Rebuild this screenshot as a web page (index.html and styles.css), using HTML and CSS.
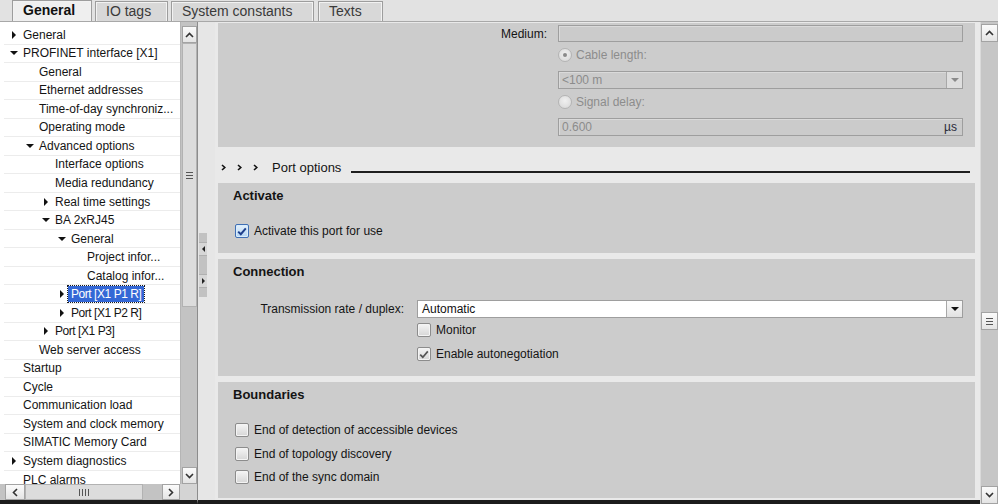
FILE: index.html
```html
<!DOCTYPE html>
<html>
<head>
<meta charset="utf-8">
<link rel="stylesheet" href="styles.css">
</head>
<body>
<div class="app">
  <div class="tabbar">
    <div class="tab active t1">General</div>
    <div class="tab t2">IO tags</div>
    <div class="tab t3">System constants</div>
    <div class="tab t4">Texts</div>
  </div>
  <div class="main">
    <div class="left">
      <div class="tree-area">
        <div class="tree">
          <div class="row l0"><span class="tw"><i class="ar-r"></i></span><span>General</span></div>
          <div class="row l0"><span class="tw"><i class="ar-d"></i></span><span>PROFINET interface [X1]</span></div>
          <div class="row l1"><span class="tw"></span><span>General</span></div>
          <div class="row l1"><span class="tw"></span><span>Ethernet addresses</span></div>
          <div class="row l1"><span class="tw"></span><span>Time-of-day synchroniz...</span></div>
          <div class="row l1"><span class="tw"></span><span>Operating mode</span></div>
          <div class="row l1"><span class="tw"><i class="ar-d"></i></span><span>Advanced options</span></div>
          <div class="row l2"><span class="tw"></span><span>Interface options</span></div>
          <div class="row l2"><span class="tw"></span><span>Media redundancy</span></div>
          <div class="row l2"><span class="tw"><i class="ar-r"></i></span><span>Real time settings</span></div>
          <div class="row l2"><span class="tw"><i class="ar-d"></i></span><span>BA 2xRJ45</span></div>
          <div class="row l3"><span class="tw"><i class="ar-d"></i></span><span>General</span></div>
          <div class="row l4"><span class="tw"></span><span>Project infor...</span></div>
          <div class="row l4"><span class="tw"></span><span>Catalog infor...</span></div>
          <div class="row l3"><span class="tw"><i class="ar-r"></i></span><span class="sel nar">Port [X1 P1 R]</span></div>
          <div class="row l3"><span class="tw"><i class="ar-r"></i></span><span class="nar">Port [X1 P2 R]</span></div>
          <div class="row l2"><span class="tw"><i class="ar-r"></i></span><span class="nar">Port [X1 P3]</span></div>
          <div class="row l1"><span class="tw"></span><span>Web server access</span></div>
          <div class="row l0"><span class="tw"></span><span>Startup</span></div>
          <div class="row l0"><span class="tw"></span><span>Cycle</span></div>
          <div class="row l0"><span class="tw"></span><span>Communication load</span></div>
          <div class="row l0"><span class="tw"></span><span>System and clock memory</span></div>
          <div class="row l0"><span class="tw"></span><span>SIMATIC Memory Card</span></div>
          <div class="row l0"><span class="tw"><i class="ar-r"></i></span><span>System diagnostics</span></div>
          <div class="row l0"><span class="tw"></span><span>PLC alarms</span></div>
        </div>
        <div class="vscroll">
          <div class="sbtn"><svg width="9" height="6" viewBox="0 0 9 6"><polyline points="1,5 4.5,1.5 8,5" fill="none" stroke="#333" stroke-width="1.6"/></svg></div>
          <div class="thumb"><span class="grip"><i></i><i></i><i></i></span></div>
          <div class="track"></div>
          <div class="sbtn"><svg width="9" height="6" viewBox="0 0 9 6"><polyline points="1,1 4.5,4.5 8,1" fill="none" stroke="#333" stroke-width="1.6"/></svg></div>
        </div>
      </div>
      <div class="hrow">
        <div class="hscroll">
          <div class="hbtn hl"><svg width="6" height="9" viewBox="0 0 6 9"><polyline points="5,1 1.5,4.5 5,8" fill="none" stroke="#333" stroke-width="1.6"/></svg></div>
          <div class="hthumb"><span class="vgrip"><i></i><i></i><i></i><i></i></span></div>
          <div class="htrack"></div>
          <div class="hbtn hr"><svg width="6" height="9" viewBox="0 0 6 9"><polyline points="1,1 4.5,4.5 1,8" fill="none" stroke="#333" stroke-width="1.6"/></svg></div>
        </div>
        <div class="corner"></div>
      </div>
    </div>

    <div class="splitter">
      <div class="handle">
        <div class="hb"><i class="sa-l"></i></div>
        <div class="hb"><i class="sa-r"></i></div>
      </div>
    </div>

    <div class="right">
      <div class="content">
        <div class="sec s1">
          <div class="frow">
            <span class="lbl">Medium:</span>
            <div class="fld dis"></div>
          </div>
          <div class="frow ind r-cable">
            <span class="rd on"></span><span class="dtx">Cable length:</span>
          </div>
          <div class="frow ind r-drop">
            <div class="fld dis tall"><span class="dval">&lt;100 m</span><span class="ddb dis-b"><i class="tri g"></i></span></div>
          </div>
          <div class="frow ind r-sig">
            <span class="rd"></span><span class="dtx">Signal delay:</span>
          </div>
          <div class="frow ind r-val">
            <div class="fld dis tall"><span class="dval">0.600</span><span class="unit">µs</span></div>
          </div>
        </div>

        <div class="ohead">
          <span class="chev"><svg width="5" height="7" viewBox="0 0 5 7"><polyline points="1,1 3.8,3.5 1,6" fill="none" stroke="#111" stroke-width="1.6"/></svg></span>
          <span class="chev"><svg width="5" height="7" viewBox="0 0 5 7"><polyline points="1,1 3.8,3.5 1,6" fill="none" stroke="#111" stroke-width="1.6"/></svg></span>
          <span class="chev"><svg width="5" height="7" viewBox="0 0 5 7"><polyline points="1,1 3.8,3.5 1,6" fill="none" stroke="#111" stroke-width="1.6"/></svg></span>
          <span class="otitle">Port options</span>
          <span class="oline"></span>
        </div>

        <div class="sec s2">
          <div class="stitle">Activate</div>
          <div class="crow a1">
            <span class="cb blue"><svg width="10" height="9" viewBox="0 0 10 9"><polyline points="1.2,4.6 3.8,7.2 8.8,1.4" fill="none" stroke="#1e3f8c" stroke-width="2"/></svg></span>
            <span>Activate this port for use</span>
          </div>
        </div>

        <div class="sec s3">
          <div class="stitle">Connection</div>
          <div class="frow c-drop">
            <span class="lbl2">Transmission rate / duplex:</span>
            <div class="fld en"><span class="eval">Automatic</span><span class="ddb"><i class="tri"></i></span></div>
          </div>
          <div class="crow c-mon">
            <span class="cb"></span><span>Monitor</span>
          </div>
          <div class="crow c-auto">
            <span class="cb"><svg width="10" height="9" viewBox="0 0 10 9"><polyline points="1.2,4.6 3.8,7.2 8.8,1.4" fill="none" stroke="#555" stroke-width="1.7"/></svg></span><span>Enable autonegotiation</span>
          </div>
        </div>

        <div class="sec s4">
          <div class="stitle">Boundaries</div>
          <div class="crow b1"><span class="cb"></span><span>End of detection of accessible devices</span></div>
          <div class="crow b2"><span class="cb"></span><span>End of topology discovery</span></div>
          <div class="crow b3"><span class="cb"></span><span>End of the sync domain</span></div>
        </div>
      </div>
      <div class="rscroll">
        <div class="sbtn r"><svg width="9" height="6" viewBox="0 0 9 6"><polyline points="1,5 4.5,1.5 8,5" fill="none" stroke="#333" stroke-width="1.6"/></svg></div>
        <div class="rgap1"></div>
        <div class="sbtn r gripbox"><span class="grip"><i></i><i></i><i></i></span></div>
        <div class="rgap2"></div>
        <div class="sbtn r"><svg width="9" height="6" viewBox="0 0 9 6"><polyline points="1,1 4.5,4.5 8,1" fill="none" stroke="#333" stroke-width="1.6"/></svg></div>
      </div>
    </div>
  </div>
</div>
</body>
</html>
```

FILE: styles.css
```css
* { box-sizing: border-box; margin: 0; padding: 0; }
html, body { width: 998px; height: 504px; overflow: hidden; }
body {
  font-family: "Liberation Sans", Arial, sans-serif;
  font-size: 12px;
  color: #141414;
  background: #1c1c1c;
}
.app { width: 998px; height: 504px; display: flex; flex-direction: column; background: #e6e6e6; }

/* tabs */
.tabbar {
  flex: none; height: 22px; display: flex; align-items: flex-end;
  padding-left: 12px; background: #e2e2e2; border-bottom: 1px solid #a8a8a8;
}
.tab {
  height: 20px; border: 1px solid #9d9d9d; border-bottom: 0;
  background: #d8d8d8; box-shadow: inset 1px 1px 0 #f2f2f2, inset -1px 0 0 #f2f2f2;
  font-size: 14px; line-height: 19px; padding-left: 10px; margin-right: 3px; color: #3a3a3a;
}
.tab.active { background: #efefef; font-weight: bold; color: #111; height: 21px; }
.t1 { width: 80px; }
.t2 { width: 73px; }
.t3 { width: 143px; margin-right: 4px; }
.t4 { width: 65px; }

.main { flex: 1; display: flex; min-height: 0; }

/* left tree */
.left { width: 197px; flex: none; display: flex; flex-direction: column; background: #fff; border-bottom: 4px solid #1c1c1c; }
.tree-area { flex: 1; display: flex; min-height: 0; }
.tree { flex: 1; padding: 4px 0 0 4px; overflow: hidden; }
.row { height: 18.54px; flex: none; display: flex; align-items: center; border-bottom: 1px solid #ececec; white-space: nowrap; }
.tw { width: 13px; margin-right: 3px; flex: none; display: flex; justify-content: center; align-items: center; }
.ar-r { width: 0; height: 0; border-left: 4px solid #111; border-top: 4px solid transparent; border-bottom: 4px solid transparent; }
.ar-d { width: 0; height: 0; border-top: 4px solid #111; border-left: 4px solid transparent; border-right: 4px solid transparent; }
.l0 { padding-left: 3px; }
.l1 { padding-left: 19px; }
.l2 { padding-left: 35px; }
.l3 { padding-left: 51px; }
.l4 { padding-left: 67px; }
.nar { letter-spacing: -0.45px; }
.sel { background: #3468d6; color: #fff; outline: 1px dotted #1a1a1a; padding: 1px 3px 1px 3px; margin-left: -3px; line-height: 14px; }

.vscroll { width: 17px; flex: none; display: flex; flex-direction: column; background: #c3c3c3; padding: 4px 0 0 1px; border-left: 1px solid #b5b5b5; }
.sbtn {
  height: 17px; width: 15px; flex: none; display: flex; align-items: center; justify-content: center;
  background: linear-gradient(#fbfbfb, #e4e4e4); border: 1px solid #a3a3a3;
}
.thumb { height: 264px; width: 15px; flex: none; background: #dcdcdc; border: 1px solid #b2b2b2; display: flex; align-items: center; justify-content: center; }
.track { flex: 1; }
.grip { display: flex; flex-direction: column; gap: 2px; }
.grip i { display: block; width: 7px; height: 1px; background: #555; }

.hrow { height: 16px; flex: none; display: flex; }
.hscroll { width: 180px; display: flex; background: #c3c3c3; padding-left: 5px; }
.hbtn { width: 20px; height: 16px; display: flex; align-items: center; justify-content: center; background: linear-gradient(#fbfbfb, #e4e4e4); border: 1px solid #a3a3a3; }
.hr { width: 18px; }
.hthumb { width: 118px; height: 16px; background: #dcdcdc; border: 1px solid #b2b2b2; display: flex; align-items: center; justify-content: center; }
.htrack { flex: 1; }
.vgrip { display: flex; gap: 2px; }
.vgrip i { display: block; width: 1px; height: 7px; background: #555; }
.corner { flex: 1; background: #d4d4d4; }

/* splitter */
.splitter { width: 18px; flex: none; background: #e6e6e6; border-left: 1px solid #8c8c8c; border-bottom: 4px solid #1c1c1c; }
.handle { margin-top: 211px; margin-left: 1px; width: 8px; height: 64px; background: #c2c2c2; display: flex; flex-direction: column; justify-content: space-around; align-items: center; }
.hb { width: 8px; height: 14px; display: flex; align-items: center; justify-content: center; background: #d6d6d6; border-top: 1px solid #b0b0b0; border-bottom: 1px solid #b0b0b0; }
.sa-l { width: 0; height: 0; border-right: 3px solid #222; border-top: 3px solid transparent; border-bottom: 3px solid transparent; }
.sa-r { width: 0; height: 0; border-left: 3px solid #222; border-top: 3px solid transparent; border-bottom: 3px solid transparent; }

/* right */
.right { flex: 1; display: flex; min-width: 0; }
.content { flex: 1; background: #e9e9e9; padding: 1px 5px 0 3px; border-bottom: 4px solid #1c1c1c; display: flex; flex-direction: column; overflow: hidden; }
.sec { background: #cccccc; flex: none; }

.s1 { height: 124px; padding-top: 2px; }
.frow { display: flex; align-items: center; }
.lbl { width: 329px; margin-right: 11px; text-align: right; color: #141414; }
.ind { padding-left: 340px; }
.fld { width: 405px; height: 17px; display: flex; align-items: center; }
.fld.tall { height: 18px; }
.dis { border: 1px solid #9e9e9e; background: #cbcbcb; box-shadow: inset 1px 1px 0 #dadada; }
.r-cable { margin-top: 5px; height: 16px; }
.r-drop { margin-top: 8px; }
.r-sig { margin-top: 5px; height: 16px; }
.r-val { margin-top: 8px; }
.rd { width: 14px; height: 14px; border-radius: 50%; border: 1px solid #b4b4b4; background: radial-gradient(circle at 50% 40%, #f0f0f0, #d6d6d6); display: inline-flex; align-items: center; justify-content: center; margin-right: 4px; flex: none; }
.rd.on::after { content: ""; width: 4px; height: 4px; border-radius: 50%; background: #8a8a8a; }
.dtx { color: #8c8c8c; }
.dval { flex: 1; padding-left: 3px; color: #8c8c8c; }
.ddb { width: 16px; height: 100%; display: flex; align-items: center; justify-content: center; border-left: 1px solid #a8a8a8; background: linear-gradient(#f8f8f8, #e2e2e2); }
.dis-b { background: #dedede; }
.tri { width: 0; height: 0; border-top: 4px solid #111; border-left: 4px solid transparent; border-right: 4px solid transparent; }
.tri.g { border-top-color: #8a8a8a; }
.unit { width: 21px; padding-left: 3px; color: #2a2a3a; }

.ohead { height: 36px; flex: none; display: flex; align-items: center; padding-top: 4px; }
.chev { width: 16px; display: flex; padding-left: 3px; }
.otitle { font-size: 13px; margin-left: 6px; color: #141414; }
.oline { flex: 1; height: 2px; background: #1e1e1e; margin: 10px 5px 0 10px; }

.stitle { font-size: 13px; font-weight: bold; line-height: 16px; padding-left: 15px; color: #141414; }
.s2 { height: 70px; padding-top: 5px; }
.s3 { height: 117px; padding-top: 5px; margin-top: 6px; }
.s4 { height: 116px; padding-top: 5px; margin-top: 6px; }
.crow { display: flex; align-items: center; height: 14px; padding-left: 17px; }
.a1 { margin-top: 20px; }
.cb { width: 14px; height: 14px; border: 1px solid #8c8c8c; border-radius: 2px; background: linear-gradient(#f5f5f5, #d6d6d6); box-shadow: inset 0 0 0 1px #f4f4f4; margin-right: 5px; flex: none; display: flex; align-items: center; justify-content: center; }
.cb.blue { border-color: #3f6fb5; background: linear-gradient(#e4f1fc, #b4d5f3); box-shadow: inset 0 0 0 1px #d9ecfb; }

.c-drop { margin-top: 20px; }
.lbl2 { width: 186px; margin-right: 13px; text-align: right; }
.en { width: 546px; height: 18px; border: 1px solid #9e9e9e; background: #fff; }
.eval { flex: 1; padding-left: 4px; color: #111; }
.c-mon { margin-top: 5px; padding-left: 199px; }
.c-auto { margin-top: 10px; padding-left: 199px; }
.b1 { margin-top: 20px; }
.b2 { margin-top: 10px; }
.b3 { margin-top: 9px; }

.rscroll { width: 18px; flex: none; background: #c6c6c6; border-left: 1px solid #dadada; padding: 2px 0 0 0; display: flex; flex-direction: column; }
.sbtn.r { width: 17px; height: 18px; }
.rgap1 { height: 270px; flex: none; }
.gripbox { background: linear-gradient(#fbfbfb, #e4e4e4); }
.rgap2 { flex: 1; }
```
